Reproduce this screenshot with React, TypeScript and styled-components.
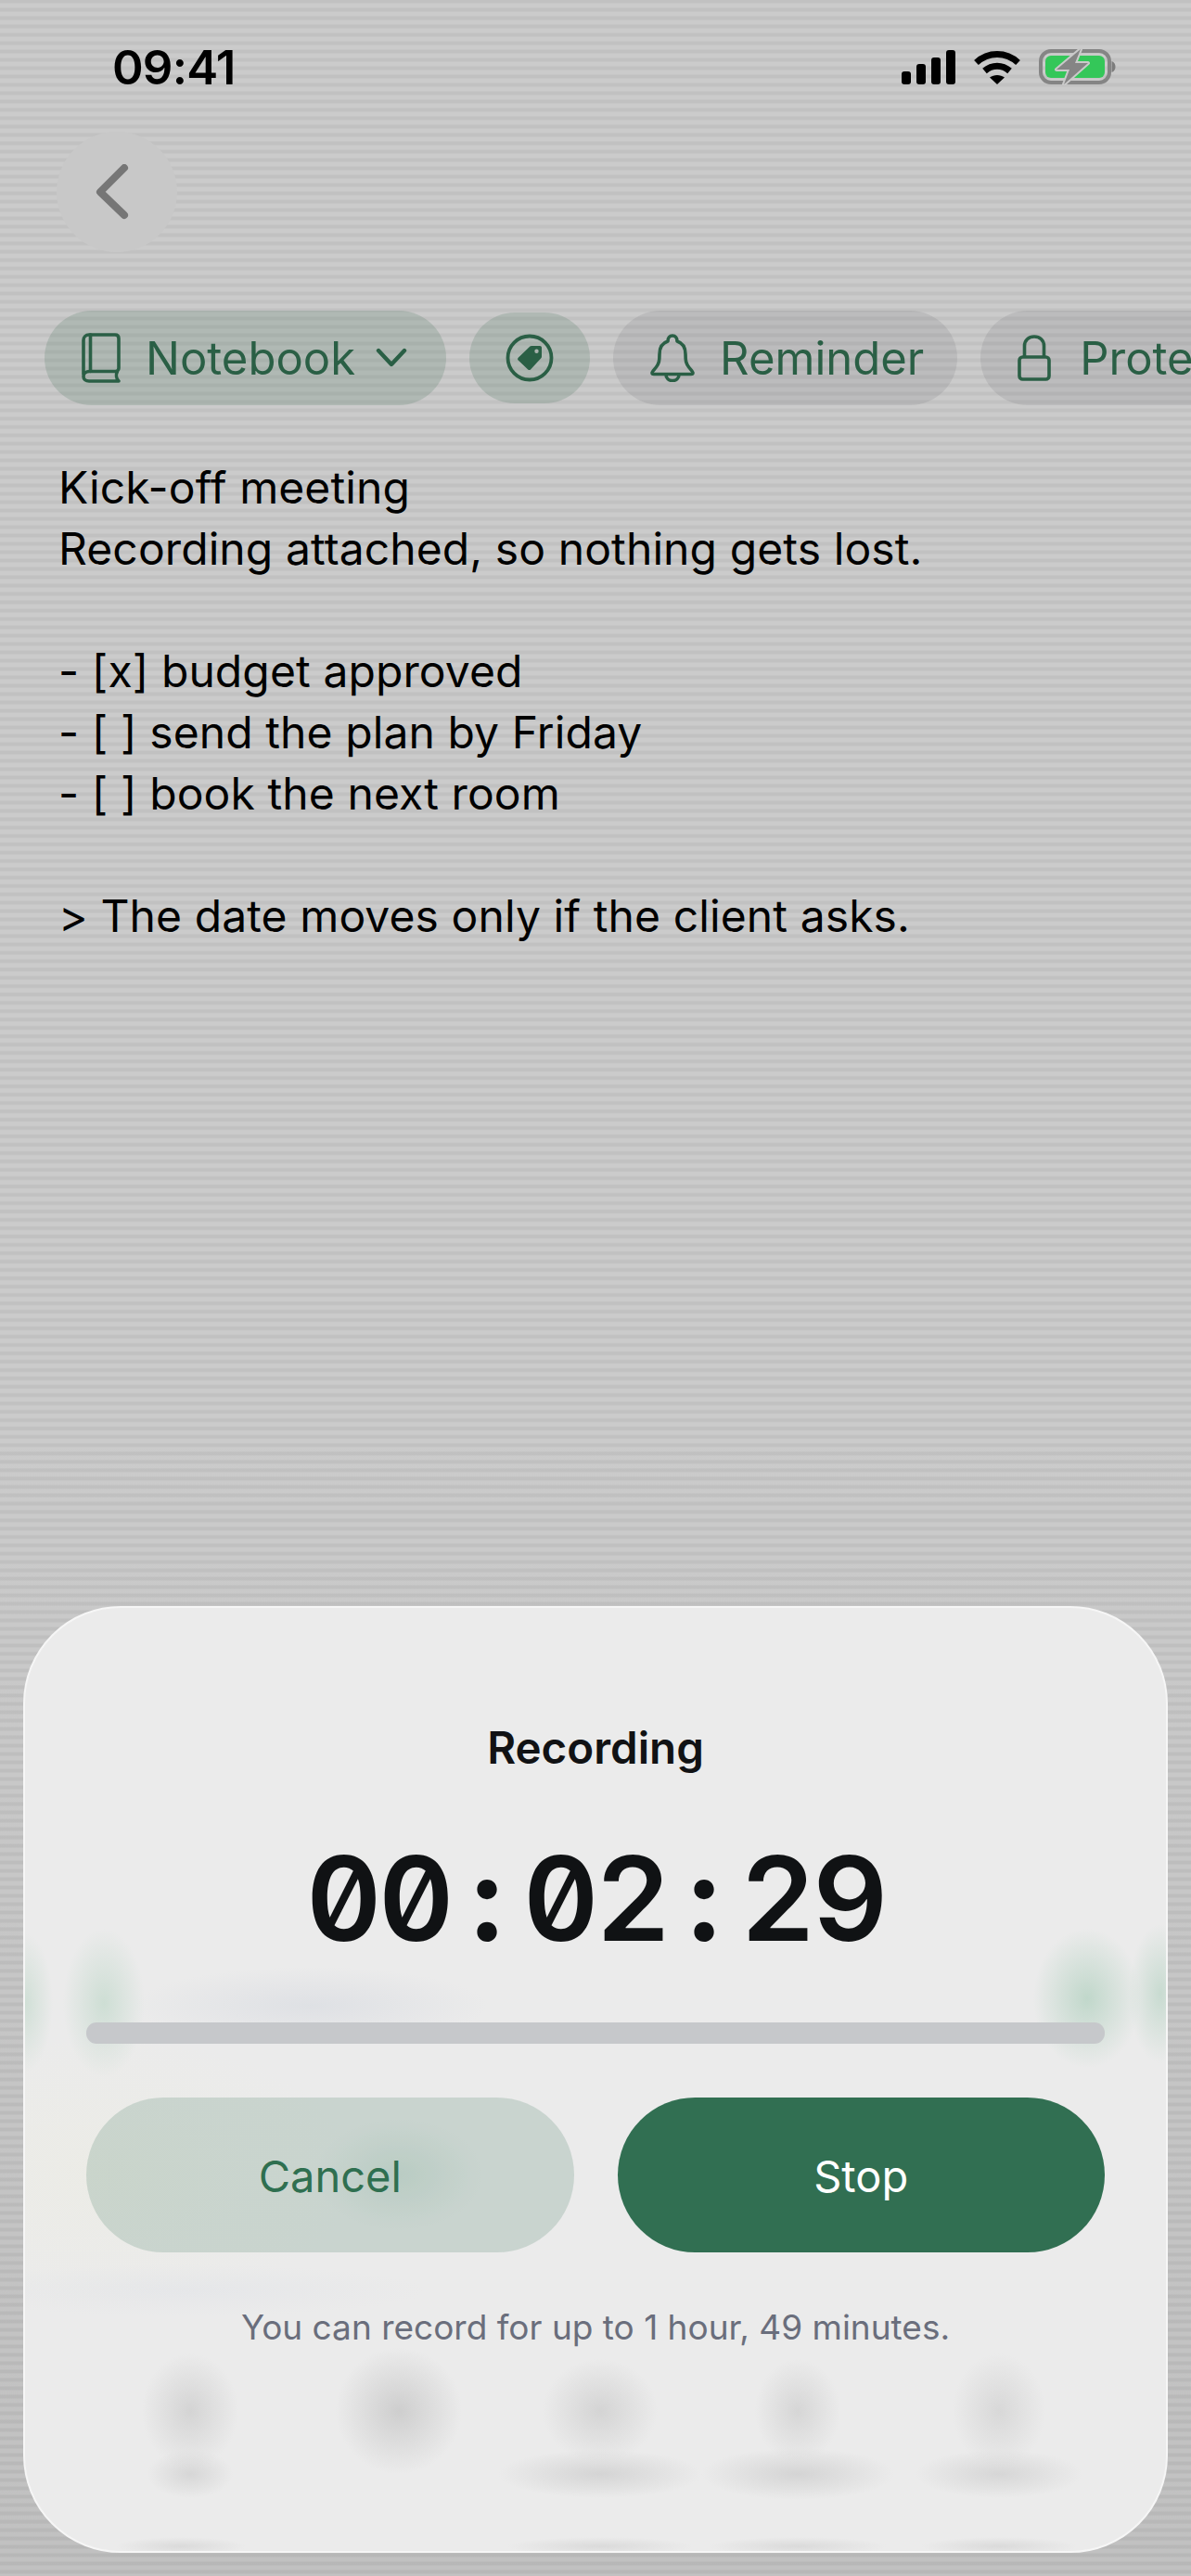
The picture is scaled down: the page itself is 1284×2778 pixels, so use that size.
import React from "react";
import styled, { createGlobalStyle } from "styled-components";

const GlobalStyle = createGlobalStyle`
    html, body {
        margin: 0;
        padding: 0;
        background: #c6c6c6;
    }
    body {
        font-family: "Inter", "Liberation Sans", sans-serif;
    }
`;

const NOTE_LINES = [
    "Kick-off meeting",
    "Recording attached, so nothing gets lost.",
    "",
    "- [x] budget approved",
    "- [ ] send the plan by Friday",
    "- [ ] book the next room",
    "",
    "> The date moves only if the client asks.",
];

const ELAPSED = "00:02:29";

function SignalIcon() {
    return (
        <svg width="58" height="37" viewBox="0 0 58 37" fill="#000">
            <rect x="0" y="23" width="10" height="14" rx="3" />
            <rect x="16" y="15" width="10" height="22" rx="3" />
            <rect x="32" y="8" width="10" height="29" rx="3" />
            <rect x="48" y="0" width="10" height="37" rx="3" />
        </svg>
    );
}

function WifiIcon() {
    return (
        <svg width="50" height="37" viewBox="0 0 50 37" fill="none">
            <path d="M2.5 13.5C15.5 1.5 34.5 1.5 47.5 13.5" stroke="#000" strokeWidth="7" />
            <path d="M11.5 22.5C19.5 15.5 30.5 15.5 38.5 22.5" stroke="#000" strokeWidth="7" />
            <path d="M17 29.5C21.5 26 28.5 26 33 29.5L25 37Z" fill="#000" />
        </svg>
    );
}

function BatteryIcon() {
    return (
        <svg width="84" height="40" viewBox="0 0 84 40" fill="none">
            <rect x="2" y="3" width="74" height="34" rx="11" stroke="#858585" strokeWidth="4" />
            <rect x="7" y="8" width="64" height="24" rx="6" fill="#34c759" />
            <path d="M78.5 14C81.5 15 82.5 17.5 82.5 20C82.5 22.5 81.5 25 78.5 26Z" fill="#7c7c7c" />
            <path
                d="M45 1L19 23H33L27 39L53 16H39Z"
                fill="#858585"
                stroke="#cacaca"
                strokeWidth="4"
                strokeLinejoin="round"
                paintOrder="stroke"
            />
        </svg>
    );
}

function BackIcon() {
    return (
        <svg width="36" height="60" viewBox="0 0 36 60" fill="none">
            <path
                d="M31 4L5 30L31 55"
                stroke="#767676"
                strokeWidth="8"
                strokeLinecap="round"
                strokeLinejoin="round"
            />
        </svg>
    );
}

function BookIcon() {
    return (
        <svg width="42" height="54" viewBox="0 0 42 54" fill="none" stroke="currentColor" strokeWidth="3.6" strokeLinejoin="round" strokeLinecap="round">
            <path d="M2 45V8C2 4.5 4.5 2 8 2H36C38.5 2 40 3.5 40 6V38C40 40 38.5 41.5 36.5 41.5H8.5C4.5 41.5 2 44 2 47C2 50 4.5 52 8 52H40C37 49 37 44.5 38.5 41.5" />
            <path d="M9.5 2V41.5" />
        </svg>
    );
}

function ChevronDownIcon() {
    return (
        <ChevronSvg width="34" height="22" viewBox="0 0 34 22" fill="none">
            <path d="M3 3L17 18L31 3" stroke="currentColor" strokeWidth="4.4" strokeLinecap="round" strokeLinejoin="round" />
        </ChevronSvg>
    );
}

function TagIcon() {
    return (
        <svg width="52" height="52" viewBox="0 0 52 52" fill="none">
            <circle cx="26" cy="26" r="23.5" stroke="currentColor" strokeWidth="3.8" />
            <path
                fillRule="evenodd"
                fill="currentColor"
                d="M28 13H37C38.2 13 39 13.8 39 15V24.5C39 25.2 38.8 25.7 38.3 26.2L27 38.5C26.2 39.3 25 39.3 24.2 38.5L13.7 28.5C12.9 27.7 12.9 26.5 13.7 25.7L26.4 13.6C26.9 13.2 27.4 13 28 13ZM33.5 16.5A2.2 2.2 0 1 0 33.5 20.9A2.2 2.2 0 1 0 33.5 16.5Z"
            />
        </svg>
    );
}

function BellIcon() {
    return (
        <svg width="48" height="52" viewBox="0 0 48 52" fill="none" stroke="currentColor" strokeWidth="3.6" strokeLinejoin="round" strokeLinecap="round">
            <path d="M19 8C19 4.5 21 2 24 2C27 2 29 4.5 29 8C35.5 10 38 15 38 22C38 29 38.5 32 42 36.5C44 39 46 41 46 42C46 43 45 43.5 44 43.5H4C3 43.5 2 43 2 42C2 41 4 39 6 36.5C9.5 32 10 29 10 22C10 15 12.5 10 19 8Z" />
            <path d="M17 44C17 48 20 50.5 24 50.5C28 50.5 31 48 31 44" />
        </svg>
    );
}

function LockIcon() {
    return (
        <svg width="40" height="50" viewBox="0 0 40 50" fill="none" stroke="currentColor" strokeWidth="3.6" strokeLinejoin="round">
            <rect x="2" y="24" width="32" height="24" rx="3.5" />
            <path d="M7.5 24V12C7.5 6 12 2 18 2C24 2 28.5 6 28.5 12V24" />
        </svg>
    );
}

export default function App() {
    return (
        <>
            <GlobalStyle />
            <Screen>
                <StatusBar>
                    <Clock>09:41</Clock>
                    <StatusIcons>
                        <SignalIcon />
                        <WifiIcon />
                        <BatteryIcon />
                    </StatusIcons>
                </StatusBar>

                <BackButton>
                    <BackIcon />
                </BackButton>

                <ChipRow>
                    <Chip $tone="green">
                        <BookIcon />
                        <ChipLabel>Notebook</ChipLabel>
                        <ChevronDownIcon />
                    </Chip>
                    <TagChip>
                        <TagIcon />
                    </TagChip>
                    <Chip>
                        <BellIcon />
                        <ChipLabel>Reminder</ChipLabel>
                    </Chip>
                    <Chip>
                        <LockIcon />
                        <ChipLabel>Protected</ChipLabel>
                    </Chip>
                </ChipRow>

                <Note>
                    {NOTE_LINES.map((line, i) => (
                        <NoteLine key={i}>{line}</NoteLine>
                    ))}
                </Note>

                <Sheet>
                    <SheetTitle>Recording</SheetTitle>
                    <Timer>
                        {ELAPSED.split("").map((ch, i) => (
                            <TimerCell key={i} $colon={ch === ":"}>
                                {ch}
                            </TimerCell>
                        ))}
                    </Timer>
                    <Progress />
                    <Actions>
                        <ActionButton>Cancel</ActionButton>
                        <ActionButton $primary>Stop</ActionButton>
                    </Actions>
                    <Hint>You can record for up to 1 hour, 49 minutes.</Hint>
                </Sheet>
            </Screen>
        </>
    );
}

const Screen = styled.div`
    position: relative;
    width: 1284px;
    height: 2778px;
    overflow: hidden;
    background:
        linear-gradient(to bottom, rgba(0, 0, 0, 0) 0, rgba(0, 0, 0, 0) 1500px, rgba(0, 0, 0, 0.05) 100%),
        repeating-linear-gradient(
            to bottom,
            #c1c1c1 0,
            #c1c1c1 3px,
            #cbcbcb 4px,
            #cbcbcb 8px,
            #c1c1c1 9px
        );
`;

const StatusBar = styled.div`
    height: 144px;
    padding: 0 80px 0 121px;
    box-sizing: border-box;
    display: flex;
    align-items: center;
    justify-content: space-between;
`;

const Clock = styled.div`
    font-size: 51px;
    font-weight: 600;
    letter-spacing: -0.8px;
    color: #000;
`;

const StatusIcons = styled.div`
    display: flex;
    align-items: center;
    gap: 20px;
`;

const BackButton = styled.div`
    width: 130px;
    height: 130px;
    margin-top: -2px;
    margin-left: 61px;
    border-radius: 50%;
    background: #c8c8c8;
    display: flex;
    align-items: center;
    justify-content: center;
    padding-right: 10px;
    box-sizing: border-box;
`;

const ChipRow = styled.div`
    display: flex;
    align-items: center;
    gap: 25px;
    margin-top: 63px;
    padding-left: 48px;
    width: max-content;
`;

const Chip = styled.div<{ $tone?: "green" }>`
    height: 102px;
    box-sizing: border-box;
    padding: 0 ${(p) => (p.$tone === "green" ? "42px" : "36px")} 0 40px;
    display: flex;
    align-items: center;
    gap: 27px;
    border-radius: 51px;
    color: #2a5f45;
    background: ${(p) => (p.$tone === "green" ? "rgba(38, 94, 65, 0.16)" : "rgba(60, 60, 70, 0.1)")};
`;

const ChevronSvg = styled.svg`
    margin-left: -5px;
`;

const TagChip = styled.div`
    width: 130px;
    height: 98px;
    border-radius: 49px;
    color: #2a5f45;
    background: rgba(38, 94, 65, 0.16);
    display: flex;
    align-items: center;
    justify-content: center;
`;

const ChipLabel = styled.span`
    font-size: 49px;
    font-weight: 400;
    line-height: 60px;
    padding-top: 2px;
`;

const Note = styled.div`
    margin-top: 56px;
    padding-left: 63px;
    color: #000;
    font-size: 48px;
    letter-spacing: 0.1px;
    line-height: 66px;
`;

const NoteLine = styled.div`
    height: 66px;
    white-space: pre;
`;

const Sheet = styled.div`
    position: absolute;
    left: 25px;
    top: 1732px;
    width: 1234px;
    height: 1021px;
    box-sizing: border-box;
    padding: 121px 66px 0;
    border: 2px solid #f6f6f6;
    border-radius: 105px;
    background-color: #ebebeb;
    background-image:
        radial-gradient(ellipse 44px 80px at 85px 426px, rgba(190, 215, 200, 0.65), transparent),
        radial-gradient(ellipse 30px 75px at 0 426px, rgba(190, 215, 200, 0.6), transparent),
        radial-gradient(ellipse 58px 75px at 1145px 421px, rgba(185, 212, 197, 0.85), transparent),
        radial-gradient(ellipse 34px 75px at 1224px 416px, rgba(185, 212, 197, 0.7), transparent),
        radial-gradient(ellipse 190px 42px at 308px 429px, rgba(222, 224, 228, 0.95), transparent),
        radial-gradient(ellipse 90px 60px at 403px 611px, rgba(170, 200, 185, 0.3), transparent),
        radial-gradient(ellipse 260px 28px at 173px 736px, rgba(226, 228, 232, 0.6), transparent),
        radial-gradient(ellipse 52px 62px at 178px 866px, #d4d4d4, transparent),
        radial-gradient(ellipse 68px 68px at 403px 866px, #cecece, transparent),
        radial-gradient(ellipse 62px 56px at 620px 866px, #d4d4d4, transparent),
        radial-gradient(ellipse 46px 56px at 833px 866px, #d6d6d6, transparent),
        radial-gradient(ellipse 50px 62px at 1050px 866px, #d8d8d8, transparent),
        radial-gradient(ellipse 46px 26px at 178px 934px, #d6d6d6, transparent),
        radial-gradient(ellipse 110px 26px at 620px 934px, #d4d4d4, transparent),
        radial-gradient(ellipse 104px 28px at 833px 934px, #d4d4d4, transparent),
        radial-gradient(ellipse 90px 26px at 1050px 934px, #d6d6d6, transparent),
        radial-gradient(ellipse 70px 10px at 168px 1012px, #dadada, transparent),
        radial-gradient(ellipse 100px 10px at 620px 1012px, #dadada, transparent),
        radial-gradient(ellipse 96px 10px at 833px 1012px, #dadada, transparent),
        radial-gradient(ellipse 84px 10px at 1050px 1012px, #dadada, transparent),
        radial-gradient(ellipse 280px 150px at 80px 610px, rgba(236, 236, 228, 0.7), transparent);
`;

const SheetTitle = styled.div`
    height: 60px;
    line-height: 60px;
    text-align: center;
    font-size: 47.5px;
    font-weight: 600;
    color: #111214;
`;

const Timer = styled.div`
    height: 150px;
    line-height: 150px;
    margin-top: 57px;
    display: flex;
    justify-content: center;
    font-size: 126px;
    font-feature-settings: "tnum", "zero";
    color: #101214;
`;

const TimerCell = styled.span<{ $colon?: boolean }>`
    width: 78px;
    text-align: center;
    font-weight: ${(p) => (p.$colon ? 700 : 600)};
`;

const Progress = styled.div`
    height: 23px;
    margin-top: 59px;
    border-radius: 11px;
    background: #c6c8cb;
`;

const Actions = styled.div`
    display: grid;
    grid-template-columns: 1fr 1fr;
    gap: 47px;
    margin-top: 58px;
`;

const ActionButton = styled.div<{ $primary?: boolean }>`
    height: 167px;
    box-sizing: border-box;
    padding-top: 2px;
    border-radius: 84px;
    display: flex;
    align-items: center;
    justify-content: center;
    font-size: 47px;
    font-weight: 400;
    color: ${(p) => (p.$primary ? "#ffffff" : "#2f6f50")};
    background: ${(p) => (p.$primary ? "#316f52" : "rgba(49, 111, 82, 0.18)")};
`;

const Hint = styled.div`
    height: 50px;
    line-height: 50px;
    margin-top: 56px;
    text-align: center;
    font-size: 37px;
    color: #6a6e7c;
`;
